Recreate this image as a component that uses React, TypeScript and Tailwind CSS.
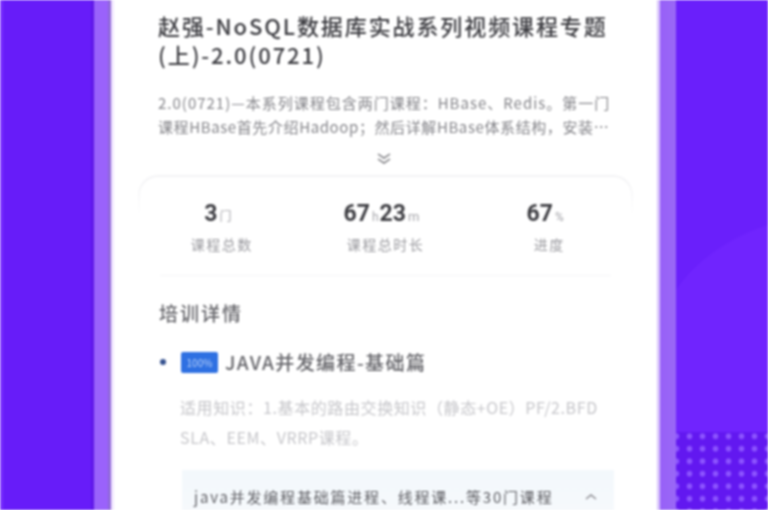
const cjk = "font-['Noto_Sans_CJK_SC','Noto_Sans',sans-serif]";

function Stat({ value, unit, value2, unit2, label }: { value: string; unit: string; value2?: string; unit2?: string; label: string }) {
  return (
    <div className="flex flex-col items-center">
      <div className="h-[30px] flex items-baseline font-['Roboto','Noto_Sans_CJK_SC',sans-serif] text-[#3d3d42] -ml-[8px]">
        <span className="text-[23px] font-bold">{value}</span>
        <span className="text-[12px] text-[#a5a5aa] ml-[2px]">{unit}</span>
        {value2 ? <span className="text-[23px] font-bold ml-px">{value2}</span> : null}
        {unit2 ? <span className="text-[13px] text-[#a5a5aa] ml-[2px]">{unit2}</span> : null}
      </div>
      <div className="mt-[7px] text-[14px] tracking-[1.5px] leading-5 text-[#9b9ba0]">{label}</div>
    </div>
  );
}

export default function App() {
  return (
    <div className={`relative h-[510px] w-[768px] overflow-hidden flex bg-[#6a1ffb] blur-[1px] ${cjk}`}>
      {/* left side */}
      <div className="w-[91px] shrink-0 bg-[#671cf9] border-l-[3px] border-[#7a30ff]" />
      <div className="w-[3px] shrink-0 bg-[#5f17e8]" />
      <div className="w-[14px] shrink-0 bg-[#9a62fb]" />
      <div className="w-[3px] shrink-0 bg-[#8f68d8]" />
      <div className="w-[3px] shrink-0 bg-[#f1e6ff]" />

      {/* phone page */}
      <div className="w-[543px] shrink-0 bg-white">
        <div className="pl-[44px] pr-[40px] pt-[11px]">
          <h1 className="text-[22px] tracking-[1.9px] leading-[29px] font-medium text-[#3b3b40]">
            赵强-NoSQL数据库实战系列视频课程专题(上)-2.0(0721)
          </h1>
          <div className="mt-[22px] text-[15px] leading-[24px] text-[#85858a] whitespace-nowrap">
            <p className="tracking-[1px]">2.0(0721)—本系列课程包含两门课程：HBase、Redis。第一门</p>
            <p className="tracking-[0.6px]">课程HBase首先介绍Hadoop；然后详解HBase体系结构，安装…</p>
          </div>
        </div>
        <div className="flex justify-center mt-[12px] h-[14px] -ml-[4px]">
          <svg width="16" height="14" viewBox="0 0 16 14" fill="none" stroke="#77777c" strokeWidth="1.5">
            <path d="M2 3l6 4 6-4M2 8l6 4 6-4" />
          </svg>
        </div>

        {/* stats card, outline fades out towards the bottom */}
        <div className="mx-[24px] mt-[10px] h-[101px] rounded-t-[20px] bg-gradient-to-b from-[#f3f3f5] to-white to-40% p-[2px] pb-0">
          <div className="h-full rounded-t-[18px] bg-white flex flex-col">
            <div className="flex-1 grid grid-cols-3 pt-[20px]">
              <Stat value="3" unit="门" label="课程总数" />
              <Stat value="67" unit="h" value2="23" unit2="m" label="课程总时长" />
              <Stat value="67" unit="%" label="进度" />
            </div>
            <div className="mx-[20px] border-b border-[#f5f5f7]" />
          </div>
        </div>

        <div className="px-[45px]">
          <h2 className="mt-[23px] text-[19px] tracking-[2px] leading-[28px] font-medium text-[#66666b]">培训详情</h2>
          <div className="mt-[22px] flex items-center h-[26px]">
            <span className="w-[6px] h-[6px] rounded-full bg-[#34518f] ml-px" />
            <span className="ml-[15px] w-[37px] h-[21px] rounded-[2px] bg-[#2e70e2] text-[10px] text-[#b9d2fa] flex items-center justify-center">100%</span>
            <span className="ml-[7px] text-[19px] tracking-[1.4px] leading-[26px] font-medium text-[#66666b]">JAVA并发编程-基础篇</span>
          </div>
          <p className="mt-[17px] ml-[21px] text-[16px] tracking-[0.6px] leading-[30px] text-[#c6c6ca]">
            适用知识：1.基本的路由交换知识（静态+OE）PF/2.BFD SLA、EEM、VRRP课程。
          </p>
          <div className="mt-[18px] ml-[23px] mr-[-2px] h-[50px] bg-gradient-to-b from-[#f3f8fc] to-[#f7fafd] pl-[12px] pr-[16px] pt-[10px] flex items-start justify-between">
            <span className="text-[15px] tracking-[1.8px] leading-[34px] whitespace-nowrap text-[#5f5f64]">java并发编程基础篇进程、线程课...等30门课程</span>
            <svg className="mt-[12px]" width="14" height="10" viewBox="0 0 14 10" fill="none" stroke="#8a8a8f" strokeWidth="1.4">
              <path d="M2 7l5-4 5 4" />
            </svg>
          </div>
        </div>
      </div>

      {/* right side */}
      <div className="w-[3px] shrink-0 bg-[#d8c4fb]" />
      <div className="w-[16px] shrink-0 bg-gradient-to-r from-[#9760f8] to-[#9a68f6]" />
      <div className="flex-1 flex flex-col bg-[#6a1ffb]">
        <div className="flex-1" />
        <div className="relative z-10 h-[78px] bg-[#6218f0] bg-[radial-gradient(circle,#8d55ff_2.6px,transparent_3.2px)] bg-[length:13px_12.5px] bg-[position:-6px_-2px]" />
      </div>

      <svg className="absolute right-0 top-[225px]" width="92" height="285" viewBox="0 0 92 285">
        <path d="M0 65C20 35 55 12 92 0V285H0Z" fill="#7327ff" opacity="0.75" />
      </svg>
    </div>
  );
}
